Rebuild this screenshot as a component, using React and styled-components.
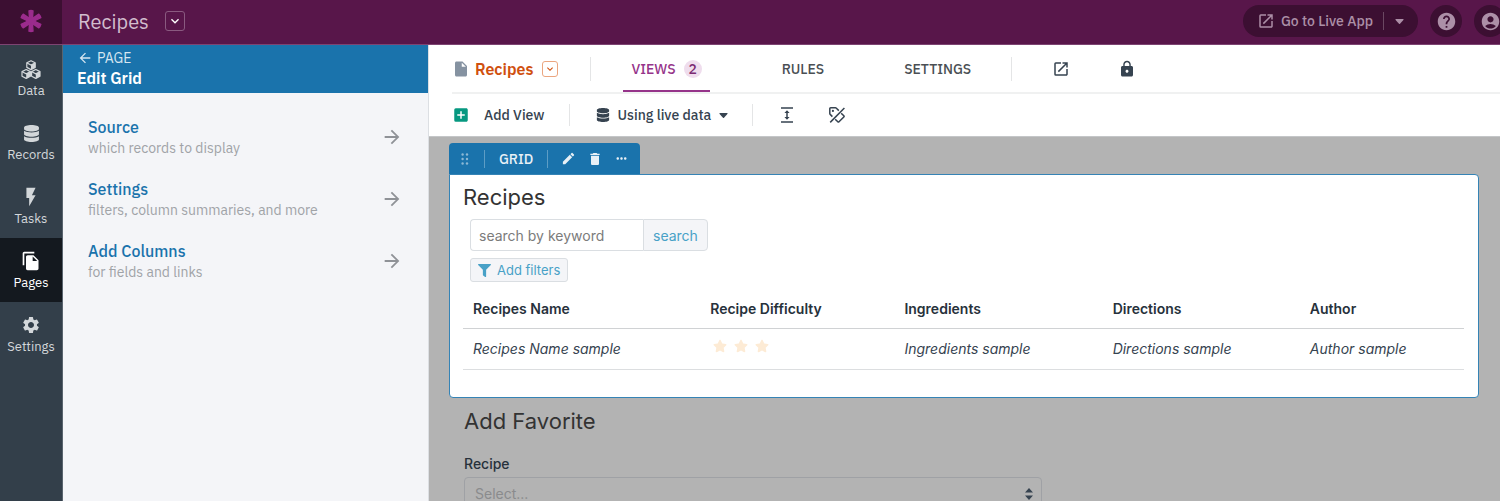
import React from 'react';
import styled, { createGlobalStyle } from 'styled-components';
import { FaDatabase, FaFilter, FaStar } from 'react-icons/fa';
import {
  MdAccountCircle,
  MdAddBox,
  MdArrowBack,
  MdArrowForward,
  MdDelete,
  MdEdit,
  MdFileCopy,
  MdFlashOn,
  MdHelp,
  MdInsertDriveFile,
  MdKeyboardArrowDown,
  MdLock,
  MdMoreHoriz,
  MdOpenInNew,
  MdSettings,
} from 'react-icons/md';

const panelLinks = [
  { title: 'Source', text: 'which records to display' },
  { title: 'Settings', text: 'filters, column summaries, and more' },
  { title: 'Add Columns', text: 'for fields and links' },
];

const columns = [
  { name: 'Recipes Name', width: '23.7%' },
  { name: 'Recipe Difficulty', width: '19.4%', rating: true },
  { name: 'Ingredients', width: '20.8%' },
  { name: 'Directions', width: '19.7%' },
  { name: 'Author', width: '16.4%' },
];

function LogoIcon() {
  return (
    <svg width="22" height="24" viewBox="0 0 22 24" aria-hidden="true">
      <g fill="#9b2c8d" stroke="#9b2c8d" strokeWidth="1.4" strokeLinejoin="round">
        {[0, 60, 120].map((angle) => (
          <path key={angle} d="M9 1.8q2-.6 4 0L12.3 12l.7 10.2q-2 .6-4 0L9.7 12z" transform={`rotate(${angle} 11 12)`} />
        ))}
      </g>
    </svg>
  );
}

function CubesIcon() {
  const cube = (x, y) => (
    <g transform={`translate(${x} ${y})`}>
      <path d="M5 .7L9.2 2.8v4.6L5 9.6.8 7.4V2.8z" fill="none" stroke="currentColor" strokeWidth="1.2" strokeLinejoin="round" />
      <path d="M1 3l4 2 4-2" fill="none" stroke="currentColor" strokeWidth="1.2" />
      <path d="M5 5l4.2-2.1v4.5L5 9.6z" fill="currentColor" />
    </g>
  );
  return (
    <svg width="20" height="19" viewBox="0 0 20 19" aria-hidden="true">
      {cube(5, 0)}
      {cube(0.2, 8.8)}
      {cube(9.8, 8.8)}
    </svg>
  );
}

function CaretIcon() {
  return (
    <svg width="9" height="5" viewBox="0 0 9 5" fill="currentColor" aria-hidden="true">
      <path d="M1 0h7q1 .2.4 1L5 4.7q-.5.4-1 0L.6 1Q0 .2 1 0z" />
    </svg>
  );
}

function DragIcon() {
  return (
    <svg width="8" height="12" viewBox="0 0 8 12" fill="currentColor" aria-hidden="true">
      {[1.5, 6, 10.5].map((y) => (
        <g key={y}>
          <circle cx="1.6" cy={y} r="1.2" />
          <circle cx="6" cy={y} r="1.2" />
        </g>
      ))}
    </svg>
  );
}

function HeightIcon() {
  return (
    <svg width="12" height="16" viewBox="0 0 12 16" fill="none" stroke="currentColor" strokeWidth="1.5" aria-hidden="true">
      <path d="M0 1h12M0 15h12M6 4v8" />
      <path d="M3.4 6L6 3.2 8.6 6zM3.4 10L6 12.8 8.6 10z" fill="currentColor" stroke="none" />
    </svg>
  );
}

function TagOffIcon() {
  return (
    <svg width="16" height="16" viewBox="0 0 16 16" fill="none" stroke="currentColor" strokeWidth="1.5" strokeLinejoin="round" aria-hidden="true">
      <path d="M3.4 9.6L1.2 7.4Q.8 7 .8 6.4V1.7Q.8.8 1.7.8h4.7q.6 0 1 .4l2.4 2.4" />
      <path d="M12.2 6.2l2.6 2.6q.6.6 0 1.2L10 14.8q-.6.6-1.2 0l-2.6-2.6" />
      <path d="M15.4 1L1.2 15.4" />
      <circle cx="3.9" cy="3.9" r="1.1" fill="currentColor" stroke="none" />
    </svg>
  );
}

function SortIcon() {
  return (
    <svg width="8" height="12" viewBox="0 0 8 12" fill="#364350" aria-hidden="true">
      <path d="M4 0l4 4.4H0zM4 12L0 7.6h8z" />
    </svg>
  );
}

export default function App() {
  return (
    <>
      <GlobalStyle />
      <Page>
        <TopBar>
          <Logo href="#home" aria-label="Home">
            <LogoIcon />
          </Logo>
          <AppName>Recipes</AppName>
          <AppMenuButton aria-label="Switch app">
            <MdKeyboardArrowDown size={16} />
          </AppMenuButton>
          <TopActions>
            <LivePill>
              <LiveButton>
                <MdOpenInNew size={18} />
                Go to Live App
              </LiveButton>
              <LiveMenuButton aria-label="Live app options">
                <CaretIcon />
              </LiveMenuButton>
            </LivePill>
            <RoundButton aria-label="Help">
              <MdHelp size={21} />
            </RoundButton>
            <RoundButton aria-label="Account">
              <MdAccountCircle size={21} />
            </RoundButton>
          </TopActions>
        </TopBar>

        <Body>
          <Rail>
            <RailLink href="#data">
              <CubesIcon />
              Data
            </RailLink>
            <RailLink href="#records">
              <FaDatabase size={17} />
              Records
            </RailLink>
            <RailLink href="#tasks">
              <MdFlashOn size={22} />
              Tasks
            </RailLink>
            <RailLink href="#pages" $active>
              <MdFileCopy size={20} />
              Pages
            </RailLink>
            <RailLink href="#settings">
              <MdSettings size={20} />
              Settings
            </RailLink>
          </Rail>

          <Panel>
            <PanelHeader>
              <BackLink href="#page">
                <MdArrowBack size={16} />
                PAGE
              </BackLink>
              <PanelTitle>Edit Grid</PanelTitle>
            </PanelHeader>
            <PanelList>
              {panelLinks.map((link) => (
                <PanelLink href="#edit" key={link.title}>
                  <div>
                    <PanelLinkTitle>{link.title}</PanelLinkTitle>
                    <PanelLinkText>{link.text}</PanelLinkText>
                  </div>
                  <MdArrowForward size={22} />
                </PanelLink>
              ))}
            </PanelList>
          </Panel>

          <Main>
            <Bars>
              <TabBar>
                <PageName>
                  <MdInsertDriveFile size={18} />
                  Recipes
                </PageName>
                <PageMenuButton aria-label="Switch page">
                  <MdKeyboardArrowDown size={12} />
                </PageMenuButton>
                <TabDivider />
                <Tabs>
                  <Tab $active>
                    VIEWS <Count>2</Count>
                  </Tab>
                  <Tab>RULES</Tab>
                  <Tab>SETTINGS</Tab>
                </Tabs>
                <TabDivider />
                <TabIcons>
                  <IconButton aria-label="Open page">
                    <MdOpenInNew size={18} />
                  </IconButton>
                  <IconButton aria-label="Page permissions">
                    <MdLock size={18} />
                  </IconButton>
                </TabIcons>
              </TabBar>
              <ToolBar>
                <AddViewButton>
                  <MdAddBox size={18} />
                  Add View
                </AddViewButton>
                <ToolDivider />
                <DataButton>
                  <FaDatabase size={14} />
                  Using live data
                  <CaretIcon />
                </DataButton>
                <ToolDivider />
                <ToolIcons>
                  <IconButton aria-label="Row height">
                    <HeightIcon />
                  </IconButton>
                  <IconButton aria-label="Hide labels">
                    <TagOffIcon />
                  </IconButton>
                </ToolIcons>
              </ToolBar>
            </Bars>

            <Canvas>
              <ViewHandle>
                <DragButton aria-label="Move view">
                  <DragIcon />
                </DragButton>
                <ViewType>GRID</ViewType>
                <HandleActions>
                  <IconButton aria-label="Edit view">
                    <MdEdit size={15} />
                  </IconButton>
                  <IconButton aria-label="Delete view">
                    <MdDelete size={16} />
                  </IconButton>
                  <IconButton aria-label="More">
                    <MdMoreHoriz size={15} />
                  </IconButton>
                </HandleActions>
              </ViewHandle>

              <ViewCard>
                <ViewTitle>Recipes</ViewTitle>
                <SearchForm onSubmit={(e) => e.preventDefault()}>
                  <SearchInput type="text" placeholder="search by keyword" aria-label="search by keyword" />
                  <SearchButton type="submit">search</SearchButton>
                </SearchForm>
                <FilterButton>
                  <FaFilter size={13} />
                  Add filters
                </FilterButton>
                <Table>
                  <thead>
                    <tr>
                      {columns.map((column) => (
                        <HeadCell key={column.name} $width={column.width}>
                          {column.name}
                        </HeadCell>
                      ))}
                    </tr>
                  </thead>
                  <tbody>
                    <tr>
                      {columns.map((column) => (
                        <Cell key={column.name}>
                          {column.rating ? (
                            <Stars role="img" aria-label="Rating">
                              <FaStar size={14} />
                              <FaStar size={14} />
                              <FaStar size={14} />
                            </Stars>
                          ) : (
                            `${column.name} sample`
                          )}
                        </Cell>
                      ))}
                    </tr>
                  </tbody>
                </Table>
              </ViewCard>

              <FormView>
                <ViewTitle>Add Favorite</ViewTitle>
                <FieldLabel htmlFor="recipe">Recipe</FieldLabel>
                <SelectWrap>
                  <Select id="recipe" defaultValue="">
                    <option value="">Select...</option>
                  </Select>
                  <SelectArrows>
                    <SortIcon />
                  </SelectArrows>
                </SelectWrap>
              </FormView>
            </Canvas>
          </Main>
        </Body>
      </Page>
    </>
  );
}

const GlobalStyle = createGlobalStyle`
  * {
    box-sizing: border-box;
  }
  body {
    margin: 0;
    overflow: hidden;
    font-family: 'IBM Plex Sans', Roboto, sans-serif;
    font-size: 14px;
    color: #364350;
  }
  button, input, select {
    font: inherit;
    color: inherit;
    margin: 0;
  }
  button {
    display: flex;
    align-items: center;
    padding: 0;
    border: 0;
    background: none;
    cursor: pointer;
  }
  a {
    color: inherit;
    text-decoration: none;
  }
  svg {
    flex-shrink: 0;
  }
`;

const Page = styled.div`
  height: 100vh;
  display: flex;
  flex-direction: column;
  overflow: hidden;
`;

const TopBar = styled.header`
  height: 45px;
  padding-bottom: 2px;
  flex-shrink: 0;
  display: flex;
  align-items: center;
  overflow: hidden;
  background: linear-gradient(to right, #3c0f32 62px, #58164a 62px);
  border-bottom: 1px solid #7d4472;
`;

const Logo = styled.a`
  width: 62px;
  display: flex;
  justify-content: center;
`;

const AppName = styled.span`
  margin-left: 16px;
  font-size: 20px;
  color: #d2bdce;
`;

const AppMenuButton = styled.button`
  width: 20px;
  height: 20px;
  margin-left: 16px;
  justify-content: center;
  border: 1px solid #8a5a80;
  border-radius: 3px;
  color: #fff;
`;

const TopActions = styled.div`
  margin-left: auto;
  margin-right: -6px;
  display: flex;
  gap: 12px;
  color: #ac8fa7;
`;

const LivePill = styled.div`
  height: 32px;
  display: flex;
  align-items: center;
  border-radius: 16px;
  background: #3c0f32;
`;

const LiveButton = styled.button`
  gap: 6px;
  padding: 0 10px 0 14px;
  font-weight: 500;
`;

const LiveMenuButton = styled.button`
  height: 18px;
  padding: 0 14px 0 11px;
  border-left: 1px solid #6b4862;
`;

const RoundButton = styled.button`
  width: 32px;
  height: 32px;
  justify-content: center;
  border-radius: 50%;
  background: #3c0f32;
`;

const Body = styled.div`
  flex: 1;
  min-height: 0;
  display: flex;
`;

const Rail = styled.nav`
  width: 63px;
  flex-shrink: 0;
  padding-top: 1px;
  background: #333f4a;
  border-right: 1px solid #59646e;
`;

const RailLink = styled.a`
  height: 64px;
  display: grid;
  grid-template-rows: 24px 18px;
  align-content: center;
  justify-items: center;
  align-items: center;
  font-size: 13px;
  color: ${({ $active }) => ($active ? '#fff' : '#d3d7da')};
  background: ${({ $active }) => ($active ? '#14191f' : 'transparent')};
`;

const Panel = styled.aside`
  width: 366px;
  flex-shrink: 0;
  background: #f4f5f8;
  border-right: 1px solid #dcdfe3;
`;

const PanelHeader = styled.div`
  height: 48px;
  padding: 3px 14px;
  background: #1a73ac;
  color: #fff;
`;

const BackLink = styled.a`
  display: flex;
  align-items: center;
  gap: 4px;
  line-height: 20px;
  color: #d6e6f1;
`;

const PanelTitle = styled.h1`
  margin: 0;
  font-size: 16px;
  line-height: 20px;
  font-weight: 600;
`;

const PanelList = styled.div`
  padding: 23px 25px 0;
  display: grid;
  gap: 20px;
`;

const PanelLink = styled.a`
  display: flex;
  align-items: center;
  justify-content: space-between;
  color: #8f9297;
`;

const PanelLinkTitle = styled.div`
  font-size: 16px;
  line-height: 22px;
  font-weight: 500;
  color: #1a73ac;
`;

const PanelLinkText = styled.div`
  line-height: 20px;
  color: #a0a3a7;
`;

const Main = styled.main`
  flex: 1;
  min-width: 0;
  display: flex;
  flex-direction: column;
`;

const Bars = styled.div`
  padding-left: 23px;
  background: #fff;
  border-bottom: 1px solid #c4c6c8;
`;

const TabBar = styled.div`
  height: 49px;
  display: flex;
  align-items: center;
  border-bottom: 2px solid #f0f1f1;
`;

const PageName = styled.span`
  display: flex;
  align-items: center;
  gap: 5px;
  font-size: 16px;
  font-weight: 600;
  color: #d0500f;
  svg {
    color: #8592a1;
  }
`;

const PageMenuButton = styled.button`
  width: 16px;
  height: 16px;
  margin-left: 9px;
  justify-content: center;
  border: 1px solid #eba680;
  border-radius: 3px;
  color: #d0500f;
`;

const TabDivider = styled.span`
  width: 1px;
  height: 24px;
  margin: 0 32px;
  background: #e4e5e6;
`;

const Tabs = styled.div`
  align-self: stretch;
  display: flex;
  gap: 64px;
`;

const Tab = styled.button`
  padding: 2px 8px 0;
  gap: 8px;
  font-weight: 500;
  border-bottom: 2px solid ${({ $active }) => ($active ? '#96348a' : 'transparent')};
  color: ${({ $active }) => ($active ? '#96348a' : '#4a4f54')};
`;

const Count = styled.span`
  width: 18px;
  height: 18px;
  border-radius: 50%;
  line-height: 18px;
  background: #efdded;
  color: #7c2a72;
`;

const TabIcons = styled.div`
  display: flex;
  gap: 48px;
  padding-left: 8px;
`;

const IconButton = styled.button`
  color: inherit;
`;

const ToolBar = styled.div`
  height: 42px;
  display: flex;
  align-items: center;
`;

const ToolDivider = styled.span`
  width: 1px;
  height: 22px;
  margin: 0 26px 0 24px;
  background: #e4e5e6;
`;

const AddViewButton = styled.button`
  gap: 14px;
  font-weight: 500;
  svg {
    color: #069880;
  }
`;

const DataButton = styled.button`
  gap: 8px;
  font-weight: 500;
`;

const ToolIcons = styled.div`
  display: flex;
  gap: 36px;
  padding-left: 2px;
`;

const Canvas = styled.div`
  flex: 1;
  min-height: 0;
  padding: 6px 21px 0 20px;
  overflow: hidden;
  background: #b3b3b3;
  font-family: Inter, sans-serif;
`;

const ViewHandle = styled.div`
  width: fit-content;
  height: 31px;
  padding-left: 12px;
  display: flex;
  align-items: center;
  border-radius: 4px 4px 0 0;
  background: #1a73ac;
  color: #e8f0f6;
`;

const DragButton = styled.button`
  padding-right: 15px;
  color: #8cb8d5;
`;

const ViewType = styled.span`
  padding: 0 14px;
  line-height: 18px;
  border: solid #5d9dc5;
  border-width: 0 1px;
  font-family: 'IBM Plex Sans', Roboto, sans-serif;
  font-weight: 500;
`;

const HandleActions = styled.div`
  display: flex;
  gap: 11px;
  padding: 0 11px 0 13px;
`;

const ViewCard = styled.section`
  padding: 7px 14px 27px 13px;
  border: 1px solid #3583b5;
  border-radius: 0 4px 4px 4px;
  background: #fff;
`;

const ViewTitle = styled.h2`
  margin: 0;
  font-size: 22px;
  line-height: 30px;
  font-weight: 400;
  color: #333;
`;

const SearchForm = styled.form`
  height: 32px;
  margin: 7px 7px 0;
  display: flex;
`;

const SearchInput = styled.input`
  width: 173px;
  padding: 0 8px;
  border: 1px solid #dadee2;
  border-right: 0;
  border-radius: 4px 0 0 4px;
  background: #fff;
  &::placeholder {
    color: #7b7b7b;
  }
`;

const SearchButton = styled.button`
  padding: 0 9px;
  border: 1px solid #dadee2;
  border-radius: 0 4px 4px 0;
  background: #f4f5f8;
  color: #48a1c7;
`;

const FilterButton = styled.button`
  height: 24px;
  margin: 7px 7px 0;
  padding: 0 7px;
  gap: 6px;
  border: 1px solid #dadee2;
  border-radius: 3px;
  background: #f4f5f8;
  font-size: 13px;
  color: #48a1c7;
`;

const Table = styled.table`
  width: 100%;
  margin-top: 7px;
  table-layout: fixed;
  border-collapse: collapse;
  text-align: left;
`;

const HeadCell = styled.th`
  width: ${({ $width }) => $width};
  height: 39px;
  padding: 0 10px;
  font-weight: 600;
  color: #27313b;
  border-bottom: 1px solid #d0d2d4;
`;

const Cell = styled.td`
  height: 41px;
  padding: 0 10px;
  font-style: italic;
  border-bottom: 1px solid #dcdee0;
`;

const Stars = styled.span`
  display: flex;
  gap: 7px;
  padding: 0 0 5px 3px;
  color: #fdebd5;
`;

const FormView = styled.section`
  padding: 8px 15px 0;
`;

const FieldLabel = styled.label`
  display: block;
  margin-top: 18px;
  line-height: 20px;
  font-weight: 500;
  color: #27313b;
`;

const SelectWrap = styled.div`
  max-width: 578px;
  margin-top: 3px;
  display: grid;
  align-items: center;
`;

const Select = styled.select`
  grid-area: 1 / 1;
  height: 34px;
  padding: 0 10px;
  appearance: none;
  border: 1px solid #9fa1a5;
  border-radius: 4px;
  background: transparent;
  color: #8a8b8d;
`;

const SelectArrows = styled.span`
  grid-area: 1 / 1;
  justify-self: end;
  display: flex;
  padding-right: 9px;
  pointer-events: none;
`;
